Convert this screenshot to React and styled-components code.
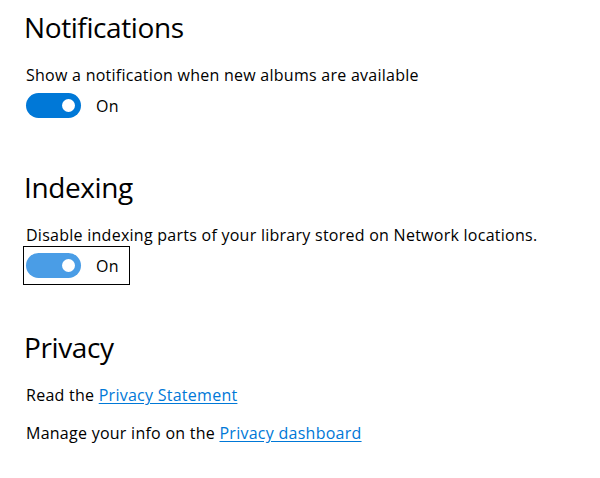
import React from 'react';
import styled, { createGlobalStyle } from 'styled-components';

const GlobalStyle = createGlobalStyle`
  html, body {
    margin: 0;
    padding: 0;
    background: #ffffff;
  }
  body {
    font-family: "Open Sans", "Noto Sans", sans-serif;
    color: #000000;
  }
`;

const Page = styled.div`
  width: 600px;
  height: 478px;
  box-sizing: border-box;
  padding: 9px 0 0 24px;
  display: flex;
  flex-direction: column;
  gap: 44px;
`;

const Section = styled.section`
  display: flex;
  flex-direction: column;
`;

const Heading = styled.h2`
  margin: 0 0 20px 0;
  font-size: 28px;
  line-height: 36px;
  font-weight: 400;
  letter-spacing: -0.4px;
`;

const Text = styled.p`
  margin: 0;
  padding-left: 2px;
  font-size: 16px;
  line-height: 20px;
  letter-spacing: 0.26px;
  & + & {
    margin-top: 18px;
  }
`;

const Link = styled.a`
  color: #0078d7;
  text-decoration: underline;
  text-underline-offset: 2px;
  cursor: pointer;
`;

const Control = styled.div`
  align-self: flex-start;
  display: flex;
  align-items: center;
  gap: 15px;
  margin: 1px 0 0 -1px;
  padding: 6px 10px 6px 2px;
  border: 1px solid ${p => (p.$focused ? '#000000' : 'transparent')};
`;

const Track = styled.span`
  position: relative;
  display: block;
  width: 55px;
  height: 25px;
  border-radius: 13px;
  background: ${p => (p.$light ? '#4a9de6' : '#0078d7')};
`;

const Knob = styled.span`
  position: absolute;
  top: 50%;
  right: 6px;
  width: 13px;
  height: 13px;
  margin-top: -6.5px;
  border-radius: 50%;
  background: #ffffff;
`;

const Label = styled.span`
  font-size: 16px;
  line-height: 20px;
  letter-spacing: 0.26px;
`;

const Toggle = ({ light, focused }) => (
  <Control $focused={focused}>
    <Track $light={light}>
      <Knob />
    </Track>
    <Label>On</Label>
  </Control>
);

export default function App() {
  return (
    <>
      <GlobalStyle />
      <Page>
        <Section>
          <Heading>Notifications</Heading>
          <Text>Show a notification when new albums are available</Text>
          <Toggle />
        </Section>
        <Section>
          <Heading>Indexing</Heading>
          <Text>Disable indexing parts of your library stored on Network locations.</Text>
          <Toggle light focused />
        </Section>
        <Section>
          <Heading>Privacy</Heading>
          <Text>
            Read the <Link>Privacy Statement</Link>
          </Text>
          <Text>
            Manage your info on the <Link>Privacy dashboard</Link>
          </Text>
        </Section>
      </Page>
    </>
  );
}
